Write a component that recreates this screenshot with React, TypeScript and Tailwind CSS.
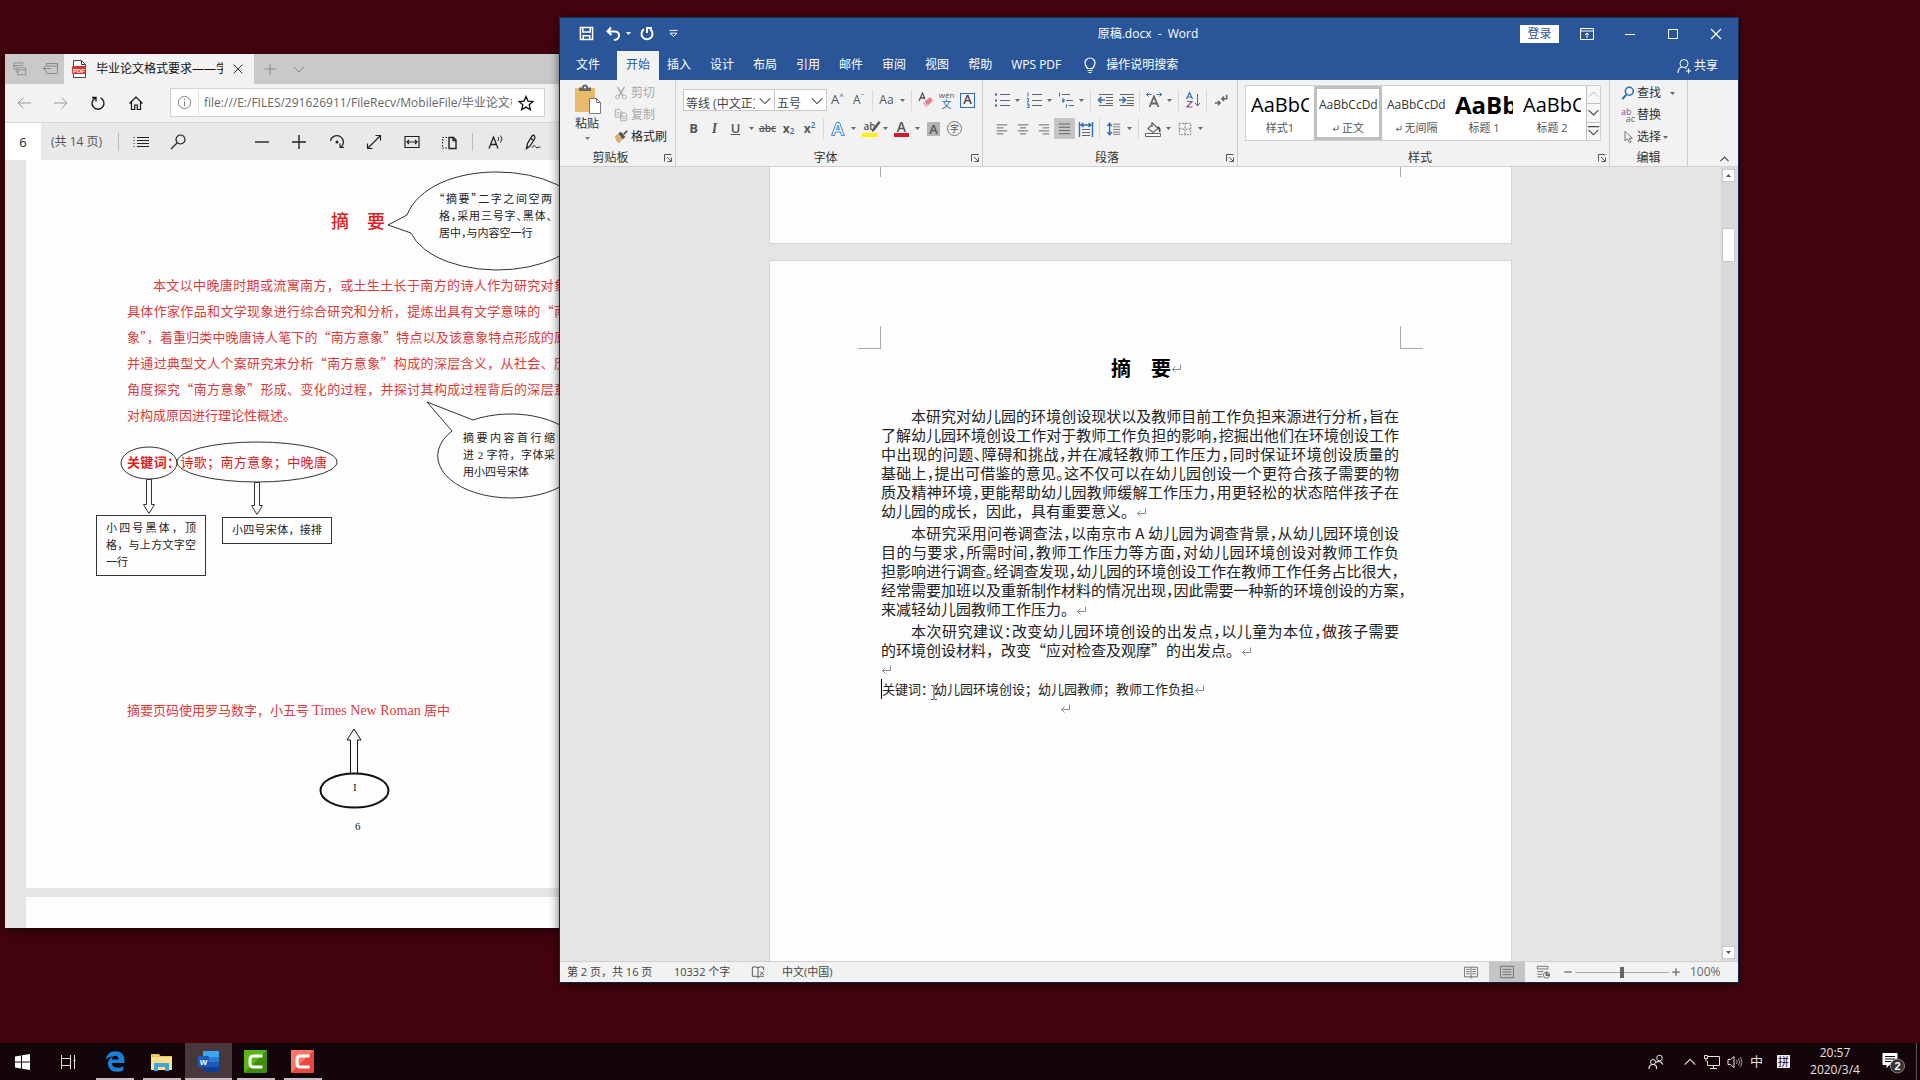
import type { ReactNode } from "react";
import clsx from "clsx";

const uiFont = "font-['Open_Sans','Noto_Sans_CJK_SC',sans-serif]";
const songFont = "font-['Liberation_Serif','Noto_Sans_CJK_SC',serif]";
const cjkFont = "font-['Noto_Sans_CJK_SC',sans-serif]";

/* ---------- small shared pieces ---------- */

function Svg({ size = 16, className, children }: { size?: number; className?: string; children: ReactNode }) {
  return (
    <svg
      width={size}
      height={size}
      viewBox="0 0 16 16"
      fill="none"
      stroke="currentColor"
      strokeWidth="1"
      className={clsx("shrink-0", className)}
      aria-hidden="true"
    >
      {children}
    </svg>
  );
}

function Caret({ className }: { className?: string }) {
  return (
    <svg width="5" height="3" viewBox="0 0 5 3" className={clsx("shrink-0", className)} aria-hidden="true">
      <path d="M0 0h5L2.5 3z" fill="currentColor" />
    </svg>
  );
}

function Tool({ label, active, children }: { label: string; active?: boolean; children: ReactNode }) {
  return (
    <button
      type="button"
      aria-label={label}
      className={clsx("flex h-[21px] w-[21px] shrink-0 items-center justify-center", active && "bg-[#c5c5c5]")}
    >
      {children}
    </button>
  );
}

function More({ label }: { label: string }) {
  return (
    <button type="button" aria-label={label} className="flex h-[21px] w-[11px] shrink-0 items-center justify-center text-[#666]">
      <Caret />
    </button>
  );
}

function Sep() {
  return <span className="mx-[3px] h-[21px] w-px shrink-0 bg-[#d9d9d9]" />;
}

function ReturnMark() {
  return (
    <svg width="11" height="9" viewBox="0 0 11 9" fill="none" stroke="#8a8a8a" className="inline-block shrink-0" aria-hidden="true">
      <path d="M9.5 0.5V5.5H1.5M4.5 2.5L1.5 5.5L4.5 8.5" />
    </svg>
  );
}

/* ---------- Edge window ---------- */

const pdfLines = [
  "本文以中晚唐时期或流寓南方，或土生土长于南方的诗人作为研究对象",
  "具体作家作品和文学现象进行综合研究和分析，提炼出具有文学意味的“南",
  "象”，着重归类中晚唐诗人笔下的“南方意象”特点以及该意象特点形成的原",
  "并通过典型文人个案研究来分析“南方意象”构成的深层含义，从社会、历",
  "角度探究“南方意象”形成、变化的过程，并探讨其构成过程背后的深层意",
];

function EdgeTabs() {
  return (
    <div className="flex h-[30px] shrink-0 items-center bg-[#c9c9c9] text-[#8a8a8a]">
      <button type="button" aria-label="标签页" className="flex w-[30px] justify-center">
        <Svg size={14}>
          <path d="M1 9V1h10v2M1 4h10M3.5 11.500V3.500M5.500 6.500h9v8h-9zM5.500 9h9M3.500 11.500h2" />
        </Svg>
      </button>
      <button type="button" aria-label="搁置标签页" className="flex w-[29px] justify-center">
        <Svg>
          <path d="M4.500 5V2.500h11v10h-11V10M4.500 5h11M1 7.500h8M4 5L1 7.500L4 10" />
        </Svg>
      </button>
      <div className="flex h-full w-[190px] items-center bg-[#f2f2f2] pl-[7px] text-[#111]">
        <svg width="16" height="18" viewBox="0 0 16 18" className="shrink-0" aria-hidden="true">
          <path d="M2.500 0.500h8l4 4v13h-12z" fill="#fff" stroke="#444" />
          <path d="M10.500 0.500v4h4" fill="none" stroke="#444" />
          <rect x="1" y="6" width="14" height="8" rx="1" fill="#d9363a" />
          <text x="8" y="12.500" textAnchor="middle" fontSize="6" fontWeight="bold" fill="#fff" fontFamily="Liberation Sans, sans-serif">PDF</text>
        </svg>
        <span className="ml-[9px] w-[127px] overflow-hidden text-xs whitespace-nowrap">毕业论文格式要求——学位论文</span>
        <button type="button" aria-label="关闭标签页" className="ml-[8px] flex items-center">
          <Svg size={14}><path d="M3 3l10 10M13 3L3 13" /></Svg>
        </button>
      </div>
      <button type="button" aria-label="新建标签页" className="flex w-[32px] justify-center">
        <Svg><path d="M8 2.500v11M2.500 8h11" /></Svg>
      </button>
      <button type="button" aria-label="标签页预览" className="flex w-[26px] justify-center">
        <Svg><path d="M3 6l5 5l5-5" /></Svg>
      </button>
    </div>
  );
}

function EdgeAddress() {
  return (
    <div className="flex h-[38px] shrink-0 items-center bg-[#f2f2f2] pb-px text-[#111]">
      <button type="button" aria-label="后退" className="flex w-[37px] justify-center text-[#999]">
        <Svg><path d="M15 8H2M7.500 2.500L2 8l5.500 5.500" /></Svg>
      </button>
      <button type="button" aria-label="前进" className="flex w-[37px] justify-center text-[#999]">
        <Svg><path d="M1 8h13M8.500 2.500L14 8l-5.500 5.500" /></Svg>
      </button>
      <button type="button" aria-label="刷新" className="flex w-[38px] justify-center">
        <Svg><path strokeWidth="1.300" d="M5.500 2.800A6 6 0 1 0 10.500 2.800M2 2.500h4v4" /></Svg>
      </button>
      <button type="button" aria-label="主页" className="flex w-[38px] justify-center">
        <Svg><path strokeWidth="1.200" d="M1.500 8.500L8 2l6.500 6.500M3.500 7v7.500h3.200V10h2.600v4.500h3.200V7" /></Svg>
      </button>
      <div className="ml-[15px] flex h-[29px] w-[375px] items-center border border-[#d2d2d2] bg-white">
        <Svg className="mx-[6px] text-[#777]" size={15}>
          <circle cx="8" cy="8" r="6.500" />
          <path d="M8 7v5M8 4v1.500" />
        </Svg>
        <span className="h-[24px] w-px bg-[#dedede]" />
        <input
          aria-label="地址"
          readOnly
          className="ml-[5px] w-[308px] bg-transparent text-xs text-[#666] outline-none"
          value="file:///E:/FILES/291626911/FileRecv/MobileFile/毕业论文格式要求"
        />
        <button type="button" aria-label="收藏" className="ml-[6px] flex">
          <Svg><path strokeWidth="1.300" d="M8 1.500l2 4.600 5 .4-3.800 3.300 1.200 4.900L8 12.100l-4.400 2.600 1.200-4.900L1 6.500l5-.4z" /></Svg>
        </button>
      </div>
    </div>
  );
}

const pdfTools: { label: string; icon: ReactNode }[] = [
  { label: "缩小", icon: <path strokeWidth="1.400" d="M1 8h14" /> },
  { label: "放大", icon: <path strokeWidth="1.400" d="M8 1v14M1 8h14" /> },
  {
    label: "旋转",
    icon: (
      <>
        <path strokeWidth="1.200" d="M1.500 7A6.500 6.500 0 1 1 11.500 13.500M15 13.500h-4V9.500" />
        <circle cx="8" cy="8" r="1.500" fill="currentColor" stroke="none" />
      </>
    ),
  },
  { label: "全屏", icon: <path strokeWidth="1.200" d="M2 14L14 2M9.500 1.500h5v5M1.500 9.500v5h5" /> },
  { label: "适应宽度", icon: <path strokeWidth="1.200" d="M1 2.500h14v11H1zM3 8h10M5 6L3 8l2 2M11 6l2 2-2 2" /> },
  {
    label: "布局",
    icon: (
      <>
        <path strokeWidth="1.400" d="M8 3.500h4.500L15 6v8.500H8zM12 3.500V6.500h3" />
        <path strokeDasharray="1.500 1.500" d="M6 3.500H1.500v10.500H6" />
      </>
    ),
  },
];

function PdfToolbar() {
  return (
    <div className="flex h-[38px] shrink-0 items-center border-t border-[#d8d8d8] bg-[#e9e9e9] text-[#222]">
      <input aria-label="页码" readOnly value="6" className="h-full w-[36px] bg-white text-center text-[13px] outline-none" />
      <span className="w-[77px] pl-[10px] text-xs whitespace-nowrap text-[#555]">(共 14 页)</span>
      <span className="h-[18px] w-px bg-[#bbb]" />
      <button type="button" aria-label="目录" className="ml-[14px] flex">
        <Svg>
          <path d="M4 3.500h12M4 6.500h12M4 9.500h12M4 12.500h12" />
          <path strokeDasharray="1 2" d="M1 3v11" />
        </Svg>
      </button>
      <button type="button" aria-label="查找" className="ml-[21px] flex">
        <Svg><path strokeWidth="1.200" d="M1 15l6-6M6 5.500a4.500 4.500 0 1 0 9 0a4.500 4.500 0 1 0 -9 0" /></Svg>
      </button>
      <div className="ml-[57px] flex w-[225px] justify-around">
        {pdfTools.map((tool) => (
          <button key={tool.label} type="button" aria-label={tool.label} className="flex">
            <Svg>{tool.icon}</Svg>
          </button>
        ))}
      </div>
      <span className="ml-[4px] h-[18px] w-px bg-[#bbb]" />
      <button type="button" aria-label="大声朗读" className="ml-[15px] flex">
        <Svg>
          <path strokeWidth="1.300" d="M1 14.500L5.500 3L10 14.500M2.500 10.500h6" />
          <path d="M10 3q1.500 1.500 0 4M12.500 1.500q3 3 0 7" />
        </Svg>
      </button>
      <button type="button" aria-label="添加笔记" className="ml-[21px] flex">
        <Svg>
          <path strokeWidth="1.300" d="M1.500 14.500l1-5L7 2q1.500-1.500 2.500 0t0 3L5 12zM6 4.500l2 1.500" />
          <path d="M7 14q2-4 3.500-1.500t2.500 1q1.500-1.500 2.500 0" />
        </Svg>
      </button>
    </div>
  );
}

function NoteLine({ children, last }: { children: ReactNode; last?: boolean }) {
  return <span className={clsx("block whitespace-nowrap", !last && "[text-align-last:justify]")}>{children}</span>;
}

function PdfPage() {
  return (
    <article className={clsx("relative h-[728px] shrink-0 bg-[#fdfdfd] pl-[101px] text-[13px] text-[#dd3b3b]", songFont)}>
      {/* callouts, arrows and boxes drawn over the page */}
      <svg width="534" height="728" viewBox="26 159 534 728" fill="none" stroke="#333" className="absolute inset-0" aria-hidden="true">
        <path d="M407 214C418 186 456 171 496 171A89 49 0 1 1 411 232L388 224Z" />
        <path d="M473 419A73 42 0 1 1 452 430L427 401Z" />
        <ellipse cx="149" cy="462" rx="28" ry="16" />
        <ellipse cx="257" cy="461" rx="80" ry="20" />
        <path d="M146.500 478.500v25h-3l5.500 9l5.500-9h-3v-25z" />
        <path d="M254.500 481.500v23h-3l5.500 9l5.500-9h-3v-23z" />
        <path d="M350.500 772v-33h-3.500l7-11l7 11h-3.500v33" stroke="#111" />
        <ellipse cx="354.500" cy="789.500" rx="34" ry="17" stroke="#111" strokeWidth="2" />
      </svg>

      <h2 className={clsx("flex gap-[18px] pt-[46px] pl-[204px] text-[18px] leading-[28px] font-medium text-[#e02020]", cjkFont)}>
        <span>摘</span>
        <span>要</span>
      </h2>
      <div className="mt-[38px] w-[440px] leading-[26px]">
        {pdfLines.map((line, i) => (
          <p key={line} className={clsx("whitespace-nowrap [text-align-last:justify]", cjkFont, i === 0 && "indent-[2em]")}>
            {line}
          </p>
        ))}
        <p className={cjkFont}>对构成原因进行理论性概述。</p>
      </div>
      <p className="mt-[21px] w-[200px] leading-[28px] whitespace-nowrap text-[#e02020] [text-align-last:justify]">
        <b>关键词：</b>诗歌；南方意象；中晚唐
      </p>
      <p className="mt-[220px] w-[320px] leading-[28px] whitespace-nowrap [text-align-last:justify]">
        摘要页码使用罗马数字，小五号 <span className="text-sm">Times New Roman</span> 居中
      </p>

      <div className="text-[11px] leading-[17px] text-[#222]">
        <p className={clsx("absolute top-[30px] left-[413px] w-[113px] [font-feature-settings:'halt']", cjkFont)}>
          <NoteLine>“摘要”二字之间空两</NoteLine>
          <NoteLine>格，采用三号字、黑体、</NoteLine>
          <NoteLine last>居中，与内容空一行</NoteLine>
        </p>
        <p className="absolute top-[270px] left-[437px] w-[92px]">
          <NoteLine>摘要内容首行缩</NoteLine>
          <NoteLine>进 2 字符，字体采</NoteLine>
          <NoteLine last>用小四号宋体</NoteLine>
        </p>
        <p className="absolute top-[355px] left-[70px] h-[61px] w-[110px] border border-[#333] px-[9px] pt-[4px]">
          <NoteLine>小四号黑体，顶</NoteLine>
          <NoteLine>格，与上方文字空</NoteLine>
          <NoteLine last>一行</NoteLine>
        </p>
        <p className="absolute top-[357px] left-[196px] w-[110px] border border-[#333] px-[9px] py-[4px]">
          <NoteLine>小四号宋体，接排</NoteLine>
        </p>
        <span className="absolute top-[619px] left-[327px]">I</span>
        <span className="absolute top-[658px] left-[329px]">6</span>
      </div>
    </article>
  );
}

function EdgeWindow() {
  return (
    <section aria-label="Edge" className="absolute top-[54px] bottom-[152px] left-[5px] flex w-[620px] flex-col overflow-hidden bg-[#e5e5e5] shadow-[0_4px_12px_rgba(0,0,0,0.5)]">
      <EdgeTabs />
      <EdgeAddress />
      <PdfToolbar />
      <div className="flex min-h-0 flex-1 flex-col gap-[9px] overflow-hidden pl-[21px]">
        <PdfPage />
        <div className="h-[200px] shrink-0 bg-[#fdfdfd]" />
      </div>
    </section>
  );
}

/* ---------- Word window ---------- */

const ribbonTabs = ["插入", "设计", "布局", "引用", "邮件", "审阅", "视图", "帮助"];

function WordTitleBar() {
  return (
    <header className="relative flex h-[33px] shrink-0 items-center pb-[2px] pl-[19px] text-xs text-white">
      <button type="button" aria-label="保存" className="flex">
        <Svg size={15}>
          <path strokeWidth="1.600" d="M1.500 1.500h13v13h-13z" />
          <path strokeWidth="1.600" d="M4 2v4.500h8V2M4.500 14.500v-4h7v4" />
        </Svg>
      </button>
      <button type="button" aria-label="撤消" className="ml-[11px] flex">
        <Svg><path strokeWidth="2" d="M6 1.500L2.500 5.500L6.500 9M3 5.500h6.500q4.500 0 4.500 4t-5 4.500" /></Svg>
      </button>
      <Caret className="ml-[5px]" />
      <button type="button" aria-label="重复" className="ml-[8px] flex">
        <Svg><path strokeWidth="2" d="M11 3.200A5.500 5.500 0 1 1 5 3.200M8 7V2h5" /></Svg>
      </button>
      <button type="button" aria-label="自定义快速访问工具栏" className="ml-[13px] flex">
        <Svg size={11}><path strokeWidth="1.400" d="M2 3.500h12M3 7.500h10l-5 5z" /></Svg>
      </button>
      <h1 className="flex-1 pl-[97px] text-center whitespace-nowrap">原稿.docx&nbsp; - &nbsp;Word</h1>
      <button type="button" className="mr-[20px] h-[18px] w-[39px] bg-white leading-[18px] text-[#2a5699]">登录</button>
      <div className="mr-[14px] flex gap-[27px]">
        <button type="button" aria-label="功能区显示选项" className="flex">
          <Svg><path d="M1.500 2.500h13v11h-13zM1.500 5h13M8 12V7M6 9l2-2l2 2" /></Svg>
        </button>
        <button type="button" aria-label="最小化" className="flex">
          <Svg><path d="M3 8.500h10" /></Svg>
        </button>
        <button type="button" aria-label="最大化" className="flex">
          <Svg><path d="M3.500 3.500h9v9h-9z" /></Svg>
        </button>
        <button type="button" aria-label="关闭" className="flex">
          <Svg><path strokeWidth="1.200" d="M3 3l10 10M13 3L3 13" /></Svg>
        </button>
      </div>
    </header>
  );
}

function WordTabs() {
  return (
    <nav className="flex h-[29px] shrink-0 items-center text-xs text-white">
      <button type="button" className="ml-[16px] pb-[2px]">文件</button>
      <button type="button" className="ml-[17px] h-full w-[42px] bg-[#f2f2f2] pb-[2px] text-[#2a5699]">开始</button>
      <div className="ml-[8px] flex gap-[19px] pb-[2px]">
        {ribbonTabs.map((tab) => (
          <button key={tab} type="button">{tab}</button>
        ))}
        <button type="button" className="whitespace-nowrap">WPS PDF</button>
      </div>
      <button type="button" className="ml-[21px] flex items-center gap-[8px] pb-[2px]">
        <Svg><path strokeWidth="1.200" d="M5.500 11.500Q3 8.500 3 6a5 5 0 0 1 10 0q0 2.500-2.500 5.500zM5.500 13.500h5M6.500 15.500h3" /></Svg>
        操作说明搜索
      </button>
      <button type="button" className="mr-[20px] ml-auto flex items-center gap-[2px]">
        <Svg><circle cx="8" cy="5.500" r="4" /><path strokeWidth="1.100" d="M2 15q0-5 4-6M9.500 9.500l1 1M10 13h5M12.500 10.500v5" /></Svg>
        共享
      </button>
    </nav>
  );
}

function Group({ label, launcher, className, children }: { label: string; launcher?: boolean; className?: string; children: ReactNode }) {
  return (
    <section aria-label={label} className={clsx("flex shrink-0 flex-col border-r border-[#cfcfcf]", className)}>
      <div className="flex-1">{children}</div>
      <div className="flex h-[16px] items-center text-xs leading-[16px] text-[#333]">
        <span className="flex-1 text-center">{label}</span>
        {launcher && (
          <button type="button" aria-label={label + "设置"} className="flex w-[14px] justify-center">
            <svg width="8" height="8" viewBox="0 0 8 8" fill="none" stroke="#555" aria-hidden="true">
              <path d="M0.500 7.500v-7h7M3 3l4 4M7.500 3.500v4h-4" />
            </svg>
          </button>
        )}
      </div>
    </section>
  );
}

function ClipboardGroup() {
  return (
    <Group label="剪贴板" launcher className="w-[116px]">
      <div className="flex">
        <button type="button" className="flex w-[54px] flex-col items-center pt-[4px] text-xs leading-[18px] text-[#333]">
          <svg width="28" height="31" viewBox="0 0 28 31" aria-hidden="true">
            <rect x="2" y="4" width="20" height="24" fill="#e8bb6c" />
            <path d="M6 7V3.500h3q0-3 3-3t3 3h3V7z" fill="#666" />
            <circle cx="12" cy="3.500" r="1" fill="#fff" />
            <path d="M16.500 14.500h7l4 4v11h-11z" fill="#fff" stroke="#777" />
            <path d="M23.500 14.500v4h4" fill="none" stroke="#777" />
          </svg>
          <span>粘贴</span>
          <Caret className="mt-[4px] text-[#777]" />
        </button>
        <div className="flex flex-col pt-[2px] text-xs text-[#a8a8a8]">
          <button type="button" className="flex h-[22px] items-center gap-[3px]">
            <Svg size={14}>
              <path strokeWidth="1.600" d="M4 1l6 10M12 1L6 11" />
              <circle cx="4" cy="12.500" r="2.200" />
              <circle cx="12" cy="12.500" r="2.200" />
            </Svg>
            剪切
          </button>
          <button type="button" className="flex h-[22px] items-center gap-[3px]">
            <Svg size={14}>
              <path d="M1.500 1.500h5l2 2v7h-7zM7.500 5.500h5l2 2v7h-7zM3 5h3M3 7.500h3M9 9.500h4M9 12h4" />
            </Svg>
            复制
          </button>
          <button type="button" className="flex h-[22px] items-center gap-[3px] text-[#222]">
            <Svg size={14}>
              <path d="M1 7l4-3l5 6l-4 5q-4-2-5-8z" fill="#e0ac6a" stroke="none" />
              <path d="M5 4l3-2l5 6l-3 2.500z" fill="#555" stroke="none" />
              <path strokeWidth="2" stroke="#555" d="M11 5l4-4" />
            </Svg>
            格式刷
          </button>
        </div>
      </div>
    </Group>
  );
}

function Combo({ label, value, className }: { label: string; value: string; className: string }) {
  return (
    <div className={clsx("relative h-[22px] border border-[#c6c6c6] bg-white", className)}>
      <select aria-label={label} className="h-full w-full appearance-none bg-transparent pr-[19px] pl-[2px] text-xs text-[#444] outline-none">
        <option>{value}</option>
      </select>
      <Svg size={14} className="pointer-events-none absolute top-[4px] right-[2px] text-[#444]">
        <path strokeWidth="1.200" d="M2 5l6 6l6-6" />
      </Svg>
    </div>
  );
}

function FontGroup() {
  return (
    <Group label="字体" launcher className="w-[307px] pl-[7px]">
      <div className="flex flex-col gap-[7px] pt-[9px] font-semibold text-[#555]">
        <div className="flex items-center font-normal">
          <Combo label="字体" value="等线 (中文正文)" className="w-[92px]" />
          <Combo label="字号" value="五号" className="-ml-px w-[53px]" />
          <Tool label="增大字号"><span className="text-[13px]">A</span><sup className="text-[8px] text-[#2a5699]">^</sup></Tool>
          <Tool label="减小字号"><span className="text-xs">A</span><sup className="text-[8px] text-[#2a5699]">ˇ</sup></Tool>
          <Sep />
          <Tool label="更改大小写"><span className="text-xs">Aa</span></Tool>
          <More label="更改大小写选项" />
          <Sep />
          <Tool label="清除格式">
            <Svg>
              <path d="M1 9L4.500 1L7 7M2.500 6h3.500" strokeWidth="1.300" />
              <path d="M5 11l7-6l3 3.500l-6.500 6.500z" fill="#e27f93" stroke="none" />
              <path d="M6 10l4 4.500" stroke="#fff" />
            </Svg>
          </Tool>
          <Tool label="拼音指南">
            <span className="flex flex-col items-center text-[8px] leading-[8px]">
              wén<span className="text-[10px] leading-[10px] text-[#2f6eb5]">文</span>
            </span>
          </Tool>
          <Tool label="字符边框">
            <span className="flex h-[15px] w-[15px] items-center justify-center border border-[#2f6eb5] text-[13px] font-semibold text-[#444]">A</span>
          </Tool>
        </div>
        <div className="flex items-center">
          <Tool label="加粗"><span className="text-[13px] font-bold">B</span></Tool>
          <Tool label="倾斜"><span className="font-['Liberation_Serif',serif] text-[14px] font-bold italic">I</span></Tool>
          <Tool label="下划线"><span className="text-[13px] underline">U</span></Tool>
          <More label="下划线选项" />
          <Tool label="删除线"><span className="text-[10px] line-through">abc</span></Tool>
          <Tool label="下标"><span className="text-xs font-bold">x</span><sub className="text-[8px] text-[#2f6eb5]">2</sub></Tool>
          <Tool label="上标"><span className="text-xs font-bold">x</span><sup className="text-[8px] text-[#2f6eb5]">2</sup></Tool>
          <Sep />
          <Tool label="文本效果">
            <Svg><path d="M1.500 14.500L6.500 1.500h3l5 13h-3l-1.200-3.500H5.700L4.500 14.500zM6.500 8.500L8 4.500l1.500 4z" stroke="#3f87cf" fill="#e6f1fb" /></Svg>
          </Tool>
          <More label="文本效果选项" />
          <Tool label="突出显示">
            <span className="relative h-[16px] w-[16px] border-b-4 border-[#fff200] text-[10px] leading-[10px]">
              ab
              <Svg size={11} className="absolute top-0 right-[-3px]"><path d="M14 1L5 13L3 14.500" strokeWidth="3.500" /></Svg>
            </span>
          </Tool>
          <More label="突出显示颜色" />
          <Tool label="字体颜色"><span className="h-[16px] border-b-4 border-[#d01a2c] px-[3px] text-[14px] leading-[12px]">A</span></Tool>
          <More label="字体颜色选项" />
          <Tool label="字符底纹"><span className="h-[14px] bg-[#b5b5b5] px-[2px] text-[13px] leading-[14px]">A</span></Tool>
          <Tool label="带圈字符">
            <span className="flex h-[15px] w-[15px] items-center justify-center rounded-full border border-[#777] text-[9px] font-normal">字</span>
          </Tool>
        </div>
      </div>
    </Group>
  );
}

function ParagraphGroup() {
  return (
    <Group label="段落" launcher className="w-[255px] pl-[8px]">
      <div className="flex flex-col gap-[7px] pt-[9px] text-[#666]">
        <div className="flex h-[22px] items-center">
          <Tool label="项目符号">
            <Svg><path d="M6 2.500h10M6 8.500h10M6 13.500h10" /><path stroke="#2f6eb5" strokeWidth="2" d="M1 2.500h2M1 8.500h2M1 13.500h2" /></Svg>
          </Tool>
          <More label="项目符号选项" />
          <Tool label="编号">
            <Svg><path d="M6 2.500h10M6 8.500h10M6 13.500h10" /><path stroke="#2f6eb5" d="M2 .5v4M1 6.500h1.500v1.500l-1.500 2h2M1 12h2v3.500H1M1.500 13.500h1" /></Svg>
          </Tool>
          <More label="编号选项" />
          <Tool label="多级列表">
            <Svg><path d="M4 2.500h8M8 8.500h7M11 13.500h5" /><path stroke="#2f6eb5" d="M1.500 .5v4M4 7h2v3H4.500V8.500H6M8.500 12.500v3" /></Svg>
          </Tool>
          <More label="多级列表选项" />
          <Sep />
          <Tool label="减少缩进量">
            <Svg><path d="M2 2.500h14M9 5.500h7M9 8.500h7M9 11.500h7M2 13.500h14" /><path stroke="#2f6eb5" strokeWidth="1.600" d="M8 8H1.500M4.500 5l-3 3l3 3" /></Svg>
          </Tool>
          <Tool label="增加缩进量">
            <Svg><path d="M2 2.500h14M9 5.500h7M9 8.500h7M9 11.500h7M2 13.500h14" /><path stroke="#2f6eb5" strokeWidth="1.600" d="M1 8h6M4.500 5l3 3l-3 3" /></Svg>
          </Tool>
          <Sep />
          <Tool label="中文版式">
            <Svg><path strokeWidth="1.800" d="M3.500 15L8 4.500l4.500 10.500M5 11.500h6" /><path stroke="#2f6eb5" d="M0 2.500h5.500M2.500 .5l-2 2l2 2M10.500 2.500H16M13.500 .5l2 2l-2 2" /></Svg>
          </Tool>
          <More label="中文版式选项" />
          <Sep />
          <Tool label="排序">
            <Svg><path stroke="#2f6eb5" strokeWidth="1.200" d="M1.500 7L4.500 .5L7.500 7M2.500 5h4" /><path stroke="#80509a" strokeWidth="1.200" d="M2 9.500h5l-5 5.500h5.500" /><path d="M12.500 2v12M10 11l2.500 3l2.500-3" /></Svg>
          </Tool>
          <Sep />
          <Tool label="显示编辑标记">
            <Svg size={14}><path strokeWidth="1.800" d="M14.500 2v4.500H9M11.500 4L9 6.500L11.500 9M1 11.500h6M4.500 9L7 11.500L4.500 14" /></Svg>
          </Tool>
        </div>
        <div className="flex items-center">
          <Tool label="左对齐"><Svg size={12}><path strokeWidth="1.300" d="M1 2.500h14M1 6.500h9M1 10.500h14M1 14.500h9" /></Svg></Tool>
          <Tool label="居中"><Svg size={12}><path strokeWidth="1.300" d="M1 2.500h14M4 6.500h8M1 10.500h14M4 14.500h8" /></Svg></Tool>
          <Tool label="右对齐"><Svg size={12}><path strokeWidth="1.300" d="M1 2.500h14M6 6.500h9M1 10.500h14M6 14.500h9" /></Svg></Tool>
          <Tool label="两端对齐" active><Svg size={13}><path strokeWidth="1.300" d="M1 2.500h14M1 6.500h14M1 10.500h14M1 14.500h14" /></Svg></Tool>
          <Tool label="分散对齐">
            <Svg><path d="M4 8.500h8M4 11.500h8M4 14.500h8" /><path stroke="#2f6eb5" strokeWidth="1.400" d="M1.500 1v15M14.500 1v15M3 4h10M5.500 2L3 4l2.500 2M10.500 2L13 4l-2.500 2" /></Svg>
          </Tool>
          <Sep />
          <Tool label="行距">
            <Svg size={14}><path d="M7 2.500h8M7 5.500h8M7 8.500h8M7 11.500h8M7 14h8" /><path stroke="#2f6eb5" strokeWidth="1.600" d="M3 2v12M.5 4.500L3 1.500l2.500 3M.5 11.500L3 14.500l2.500-3" /></Svg>
          </Tool>
          <More label="行距选项" />
          <Sep />
          <Tool label="底纹">
            <Svg><path d="M3 7.500L8 2.500l5 5l-5 4zM7 1v5" strokeWidth="1.200" /><path d="M12.500 6q3 1 2 5" stroke="#444" strokeWidth="1.600" /><path d="M.5 12.500h15v3H.5z" fill="#fff" /></Svg>
          </Tool>
          <More label="底纹选项" />
          <Tool label="边框">
            <Svg size={14}><path strokeDasharray="2 1.500" d="M1.500 1.500h13v13h-13zM8 1.500v13M1.500 8h13" /></Svg>
          </Tool>
          <More label="边框选项" />
        </div>
      </div>
    </Group>
  );
}

const styleCards = [
  { sample: "AaBbCc", name: "样式1", sampleClass: "text-[20px]" },
  { sample: "AaBbCcDd", name: "正文", sampleClass: "text-xs text-[#333]", mark: true, active: true },
  { sample: "AaBbCcDd", name: "无间隔", sampleClass: "text-xs text-[#333]", mark: true },
  { sample: "AaBb", name: "标题 1", sampleClass: "text-[24px] font-bold" },
  { sample: "AaBbCc", name: "标题 2", sampleClass: "text-[20px]" },
];

function StylesGroup() {
  return (
    <Group label="样式" launcher className="w-[372px] pl-[7px]">
      <div className="mt-[5px] flex h-[56px] w-[356px] border border-[#d0d0d0] bg-white">
        {styleCards.map((card) => (
          <button
            key={card.name}
            type="button"
            className={clsx(
              "flex w-[68px] shrink-0 flex-col overflow-hidden border-[3px] px-[2px] text-black",
              card.active ? "border-[#c0c0c0]" : "border-transparent",
            )}
          >
            <span className={clsx("block h-[32px] w-full overflow-hidden text-left leading-[32px] whitespace-nowrap", card.sampleClass)}>
              {card.sample}
            </span>
            <span className="flex w-full items-center justify-center gap-[3px] text-[11px] leading-[14px] text-[#555]">
              {card.mark && <Svg size={7}><path strokeWidth="2" d="M14 1v9H3M7 6l-4 4l4 4" /></Svg>}
              {card.name}
            </span>
          </button>
        ))}
        <div className="flex w-[15px] flex-col divide-y divide-[#c0c0c0] border-l border-[#c0c0c0] bg-[#f7f7f7] text-[#444]">
          <button type="button" aria-label="上一行" className="flex flex-1 items-center justify-center text-[#aaa]"><Svg size={13}><path d="M2 11l6-6l6 6" /></Svg></button>
          <button type="button" aria-label="下一行" className="flex flex-1 items-center justify-center"><Svg size={13}><path strokeWidth="1.300" d="M2 5l6 6l6-6" /></Svg></button>
          <button type="button" aria-label="其他" className="flex flex-1 items-center justify-center"><Svg size={13}><path strokeWidth="1.300" d="M1 2h14M2 6l6 6l6-6" /></Svg></button>
        </div>
      </div>
    </Group>
  );
}

function EditGroup() {
  return (
    <Group label="编辑" className="w-[78px]">
      <div className="flex flex-col items-start pt-[2px] pl-[11px] text-xs text-[#333]">
        <button type="button" className="flex h-[22px] items-center gap-[2px]">
          <Svg size={14}><circle cx="9.500" cy="6" r="4.500" stroke="#2f6eb5" strokeWidth="1.800" /><path stroke="#2f6eb5" strokeWidth="2.400" d="M6 10l-4.500 5" /></Svg>
          查找
          <Caret className="ml-[7px] text-[#666]" />
        </button>
        <button type="button" className="flex h-[22px] items-center gap-[2px]">
          <span className="flex w-[14px] flex-col text-[9px] leading-[7px] text-[#666]">
            <span className="text-left text-[#80509a]">ab</span>
            <span className="text-right">ac</span>
          </span>
          替换
        </button>
        <button type="button" className="flex h-[22px] items-center gap-[2px]">
          <Svg size={14} className="text-[#666]"><path d="M4.500 1.500v11l3-2.500l2 4.500l2-1l-2-4h3.500z" /></Svg>
          选择
          <Caret className="text-[#666]" />
        </button>
      </div>
    </Group>
  );
}

function Ribbon() {
  return (
    <div className="flex h-[87px] shrink-0 border-b border-[#d2d2d2] bg-[#f2f2f2]">
      <ClipboardGroup />
      <FontGroup />
      <ParagraphGroup />
      <StylesGroup />
      <EditGroup />
      <button type="button" aria-label="折叠功能区" className="mr-[7px] ml-auto flex items-end text-[#444]">
        <Svg size={13}><path strokeWidth="1.300" d="M3 10l5-5l5 5" /></Svg>
      </button>
    </div>
  );
}

type DocLine = { text: string; indent?: boolean; end?: boolean };

const docParagraphs: DocLine[][] = [
  [
    { text: "本研究对幼儿园的环境创设现状以及教师目前工作负担来源进行分析，旨在", indent: true },
    { text: "了解幼儿园环境创设工作对于教师工作负担的影响，挖掘出他们在环境创设工作" },
    { text: "中出现的问题、障碍和挑战，并在减轻教师工作压力，同时保证环境创设质量的" },
    { text: "基础上，提出可借鉴的意见。这不仅可以在幼儿园创设一个更符合孩子需要的物" },
    { text: "质及精神环境，更能帮助幼儿园教师缓解工作压力，用更轻松的状态陪伴孩子在" },
    { text: "幼儿园的成长，因此，具有重要意义。", end: true },
  ],
  [
    { text: "本研究采用问卷调查法，以南京市 A 幼儿园为调查背景，从幼儿园环境创设", indent: true },
    { text: "目的与要求，所需时间，教师工作压力等方面，对幼儿园环境创设对教师工作负" },
    { text: "担影响进行调查。经调查发现，幼儿园的环境创设工作在教师工作任务占比很大，" },
    { text: "经常需要加班以及重新制作材料的情况出现，因此需要一种新的环境创设的方案，" },
    { text: "来减轻幼儿园教师工作压力。", end: true },
  ],
  [
    { text: "本次研究建议：改变幼儿园环境创设的出发点，以儿童为本位，做孩子需要", indent: true },
    { text: "的环境创设材料，改变“应对检查及观摩”的出发点。", end: true },
  ],
];

function DocumentArea() {
  return (
    <div className="flex min-h-0 flex-1 bg-[#e5e5e5]">
      <main className="flex min-w-0 flex-1 flex-col items-center gap-[16px] overflow-hidden">
        <div className="flex h-[77px] w-[743px] shrink-0 items-start justify-between border-x border-b border-[#d4d4d4] bg-[#fdfdfd] px-[110px]">
          <span className="h-[10px] w-px bg-[#aaa]" />
          <span className="h-[10px] w-px bg-[#aaa]" />
        </div>
        <article className={clsx("w-[743px] flex-1 border-x border-t border-[#d4d4d4] bg-[#fdfdfd] px-[88px] pt-[65px] text-[#222]", cjkFont)}>
          <div className="flex justify-between">
            <span className="h-[23px] w-[23px] border-r border-b border-[#aaa]" />
            <span className="h-[23px] w-[23px] border-b border-l border-[#aaa]" />
          </div>
          <div className="pl-[23px]">
            <h2 className="mt-[5px] flex w-[520px] items-center justify-center text-[20px] leading-[28px] font-bold text-black">
              <span>摘　要</span>
              <span className="flex w-0"><ReturnMark /></span>
            </h2>
            <div className="mt-[24px] flex w-[518px] flex-col gap-[3px] text-[15px] leading-[19px]">
              {docParagraphs.map((lines) => (
                <p key={lines[0].text}>
                  {lines.map((line) => (
                    <span
                      key={line.text}
                      className={clsx(
                        "block whitespace-nowrap",
                        line.indent && "indent-[2em]",
                        !line.end && "[font-feature-settings:'halt'] [text-align-last:justify]",
                      )}
                    >
                      {line.text}
                      {line.end && <ReturnMark />}
                    </span>
                  ))}
                </p>
              ))}
            </div>
            <p className="flex h-[20px] items-center"><ReturnMark /></p>
            <p className="relative flex h-[20px] w-fit items-center border-l border-black text-[13px] leading-[16px]">
              关键词：幼儿园环境创设；幼儿园教师；教师工作负担
              <ReturnMark />
              {/* text cursor of the mouse */}
              <svg width="8" height="15" viewBox="0 0 8 15" fill="none" stroke="#444" className="absolute top-[6px] left-[48px]" aria-hidden="true">
                <path d="M1 .5h2.500M4.500 .5H7M4 1v13M1 14.500h2.500M4.500 14.500H7" />
              </svg>
            </p>
            <p className="flex h-[18px] w-[368px] items-center justify-center"><ReturnMark /></p>
          </div>
        </article>
      </main>
      <div className="flex w-[17px] shrink-0 flex-col items-center bg-[#d9d9d9] pr-[2px] text-[#555]">
        <button type="button" aria-label="向上滚动" className="mt-[2px] flex h-[13px] w-[13px] items-center justify-center border border-[#c8c8c8] bg-white">
          <Caret className="rotate-180" />
        </button>
        <span className="mt-[46px] h-[34px] w-[13px] border border-[#c8c8c8] bg-white" />
        <button type="button" aria-label="向下滚动" className="mt-auto mb-[2px] flex h-[13px] w-[13px] items-center justify-center border border-[#c8c8c8] bg-white">
          <Caret />
        </button>
      </div>
    </div>
  );
}

function StatusBar() {
  return (
    <footer className="flex h-[21px] shrink-0 items-center border-t border-[#cfcfcf] bg-[#f2f2f2] pl-[7px] text-[11px] text-[#444]">
      <span className="w-[107px] whitespace-nowrap">第 2 页，共 16 页</span>
      <span className="w-[77px] whitespace-nowrap">10332 个字</span>
      <Svg size={14}><path d="M8 3v11M8 3Q5 1.500 1.500 2.500v10.500Q5 12 8 14M8 3q3-1.500 6.500-.5V6M8 14q3-2 6.500-1M10.500 7.500l4 4M14.500 7.500l-4 4" /></Svg>
      <span className="ml-[17px] whitespace-nowrap">中文(中国)</span>
      <div className="ml-auto flex h-full items-center text-[#666]">
        <button type="button" aria-label="阅读视图" className="flex h-full w-[36px] items-center justify-center">
          <Svg size={14}><path d="M8 2.500v13M.5 2.500h15v11H.5zM2.500 5h4M2.500 7.500h4M2.500 10h4M9.500 5h4M9.500 7.500h4M9.500 10h4" /></Svg>
        </button>
        <button type="button" aria-label="页面视图" className="flex h-full w-[36px] items-center justify-center bg-[#c5c5c5]">
          <Svg size={14}><path d="M.5 1.500h15v13H.5zM3 5h10M3 8h10M3 11h10" /></Svg>
        </button>
        <button type="button" aria-label="Web 版式视图" className="flex h-full w-[36px] items-center justify-center">
          <Svg size={14}><path d="M1.500 1.500h12v3h-12zM1.500 7.500h7M1.500 10.500h6M1.500 13.500h6" /><circle cx="12" cy="11.500" r="3.500" /><path d="M12 8v3.500h3.500" strokeWidth="2" /></Svg>
        </button>
        <button type="button" aria-label="缩小" className="flex w-[14px] justify-center"><Svg size={10}><path strokeWidth="2" d="M2 8h12" /></Svg></button>
        <input
          type="range"
          aria-label="显示比例"
          min={0}
          max={200}
          defaultValue={100}
          className="h-[12px] w-[94px] appearance-none bg-[linear-gradient(#aaa,#aaa)] bg-[length:100%_1px] bg-center bg-no-repeat [&::-webkit-slider-thumb]:h-[11px] [&::-webkit-slider-thumb]:w-[4px] [&::-webkit-slider-thumb]:appearance-none [&::-webkit-slider-thumb]:bg-[#666]"
        />
        <button type="button" aria-label="放大" className="flex w-[14px] justify-center"><Svg size={10}><path strokeWidth="2" d="M2 8h12M8 2v12" /></Svg></button>
        <span className="w-[55px] pl-[7px] text-xs">100%</span>
      </div>
    </footer>
  );
}

function WordWindow() {
  return (
    <section aria-label="Word" className="absolute top-[18px] right-[182px] bottom-[98px] left-[560px] flex flex-col overflow-hidden bg-[#2a5699] shadow-[0_2px_10px_rgba(0,0,0,0.7),0_0_0_1px_#1d3d70]">
      <WordTitleBar />
      <WordTabs />
      <Ribbon />
      <DocumentArea />
      <StatusBar />
    </section>
  );
}

/* ---------- taskbar ---------- */

function TaskApp({ label, active, children }: { label: string; active?: boolean; children: ReactNode }) {
  return (
    <button
      type="button"
      aria-label={label}
      className={clsx("relative flex h-full w-[47px] items-center justify-center", active && "bg-[#48383c]")}
    >
      {children}
      <span className={clsx("absolute bottom-0 h-[2px] bg-[#c9bcc0]", active ? "w-full" : "w-[38px]")} />
    </button>
  );
}

function CamtasiaIcon({ from, to }: { from: string; to: string }) {
  return (
    <svg width="23" height="23" viewBox="0 0 23 23" aria-hidden="true">
      <rect width="23" height="23" rx="1.500" fill={to} />
      <path d="M0 0h23L0 23z" fill={from} />
      <path d="M18.500 6H9.500Q6 6 6 9.500v4Q6 17 9.500 17h9" fill="none" stroke="#fff" strokeWidth="3" />
    </svg>
  );
}

function Taskbar() {
  return (
    <footer className="absolute inset-x-0 bottom-0 flex h-[37px] items-center bg-[#130509] text-[#e8e0e2]">
      <button type="button" aria-label="开始菜单" className="flex h-full w-[45px] items-center justify-center">
        <svg width="15" height="16" viewBox="0 0 15 16" fill="#fff" aria-hidden="true">
          <path d="M0 2.500l6-1v6H0zM7 1.300L15 0v7.500H7zM0 8.500h6v6l-6-1zM7 8.500h8V16l-8-1.300z" />
        </svg>
      </button>
      <button type="button" aria-label="任务视图" className="flex h-full w-[46px] items-center justify-center">
        <Svg><path d="M1.500 1v3.500h9V1M1.500 15v-3.500h9V15M1.500 4.500v7M10.500 4.500v7M14.500 1v14M13.500 6.500h2" /></Svg>
      </button>
      <TaskApp label="Microsoft Edge">
        <svg width="20" height="21" viewBox="0 0 20 21" aria-hidden="true">
          <path d="M.5 9Q2 .5 10.500 .3Q19 .5 19.500 9v3H6.800q.4 4.500 5.500 4.700 3.500 0 6-1.500v4Q15.500 20.700 12 20.700 3.500 20.500 2.800 13q0-5 5.200-7.500Q3.500 5.500 .5 9zM7 8.500h6.500q0-3.700-3.200-3.700T7 8.500z" fill="#1b7fdc" />
        </svg>
      </TaskApp>
      <TaskApp label="文件资源管理器">
        <svg width="21" height="18" viewBox="0 0 21 18" aria-hidden="true">
          <path d="M0 1h8l1.500 2H21v14H0z" fill="#e9c35c" />
          <path d="M0 4h21v13H0z" fill="#fadf8d" />
          <path d="M3 18V10h15v8h-4v-4H7v4z" fill="#3fa7d6" />
        </svg>
      </TaskApp>
      <TaskApp label="Word 文档" active>
        <svg width="21" height="21" viewBox="0 0 21 21" aria-hidden="true">
          <path d="M5 0h16v6H5z" fill="#41a5ee" />
          <path d="M5 6h16v5H5z" fill="#2b7cd3" />
          <path d="M5 11h16v5H5z" fill="#185abd" />
          <path d="M5 16h16v5H5z" fill="#103f91" />
          <rect y="5" width="11" height="11" rx="1" fill="#185abd" />
          <text x="5.500" y="13.500" textAnchor="middle" fontSize="8" fontWeight="bold" fill="#fff" fontFamily="Liberation Sans, sans-serif">W</text>
        </svg>
      </TaskApp>
      <TaskApp label="Camtasia"><CamtasiaIcon from="#5cb512" to="#3f8f0a" /></TaskApp>
      <TaskApp label="Camtasia 录像"><CamtasiaIcon from="#ff7468" to="#e8483f" /></TaskApp>

      <div className="ml-auto flex h-full items-center">
        <button type="button" aria-label="人脉" className="flex">
          <Svg>
            <circle cx="11.500" cy="4" r="2.800" /><circle cx="5" cy="8" r="2.500" />
            <path strokeWidth="1.200" d="M1 15q0-4.500 4-4.500T8.500 15M8 8.500q3.500-3 7 2" />
          </Svg>
        </button>
        <button type="button" aria-label="显示隐藏的图标" className="ml-[19px] flex"><Svg size={14}><path strokeWidth="1.300" d="M2 11l6-6l6 6" /></Svg></button>
        <button type="button" aria-label="网络" className="ml-[7px] flex"><Svg><path d="M4 2.500h11.500v9H3.500V7M9.500 11.500v3M6 14.500h7M.5 1.500h3v3h-3zM2 4.500v3" /></Svg></button>
        <button type="button" aria-label="音量" className="ml-[7px] flex"><Svg><path d="M1 5.500h2.500l3.500-3v11l-3.500-3H1z" /><path stroke="#a09599" d="M9.500 6q1.500 2 0 4M11.500 4.500q2.500 3.500 0 7M13.500 3q3 5 0 10" /></Svg></button>
        <span className="ml-[7px] w-[13px] text-[13px]">中</span>
        <span className="ml-[14px] flex h-[13px] w-[13px] items-center justify-center bg-[#f3eef0] text-[11px] leading-[13px] text-[#130509]">拼</span>
        <time className="ml-[14px] w-[62px] pb-[2px] text-center text-xs leading-[17px]">
          20:57
          <br />
          2020/3/4
        </time>
        <button type="button" aria-label="通知" className="relative ml-[16px] flex w-[34px]">
          <svg width="24" height="24" viewBox="0 0 24 24" aria-hidden="true">
            <path d="M.5 3h15v12h-8l-3 3v-3h-4z" fill="#fff" />
            <path d="M3 6.500h10M3 9h10M3 11.500h6" stroke="#130509" />
            <circle cx="15.500" cy="16" r="7" fill="#3a3336" stroke="#8a8285" />
            <text x="15.500" y="20" textAnchor="middle" fontSize="11" fontWeight="bold" fill="#fff" fontFamily="Liberation Sans, sans-serif">2</text>
          </svg>
        </button>
        <span className="mr-[3px] h-full w-px bg-[#5b4f53]" />
      </div>
    </footer>
  );
}

export default function App() {
  return (
    <div lang="zh-CN" className={clsx("relative h-screen overflow-hidden bg-[#44040f]", uiFont)}>
      <EdgeWindow />
      <WordWindow />
      <Taskbar />
    </div>
  );
}
